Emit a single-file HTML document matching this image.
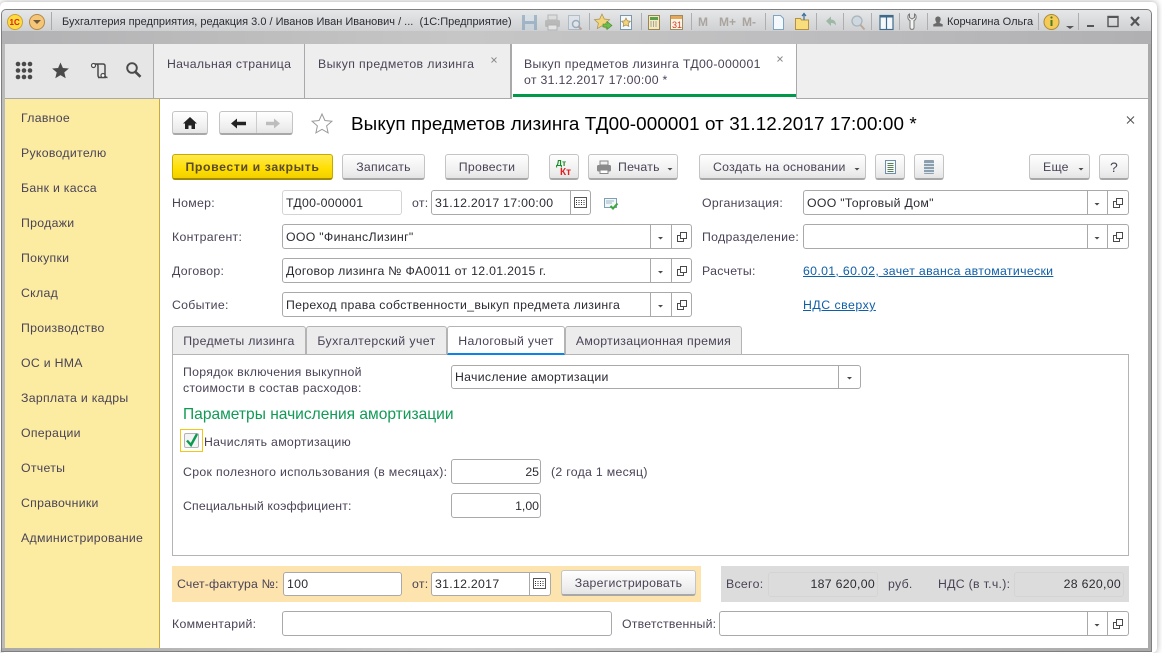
<!DOCTYPE html>
<html lang="ru"><head><meta charset="utf-8"><title>Выкуп предметов лизинга</title>
<style>
html,body{margin:0;padding:0;background:#fff}
body{width:1162px;height:653px;position:relative;overflow:hidden;font:12.3px/16px "Liberation Sans","Noto Sans CJK SC",sans-serif;color:#4a4356}
div,a,span.a{position:absolute;box-sizing:border-box}
.t{white-space:nowrap;height:16px;letter-spacing:.29px;margin-top:1px}
.n{margin-top:0}
.d{color:#2b2b33}
.f{background:#fff;border:1px solid #a9a9a9;border-radius:3px}
.l{border-color:#d4d4d4}
.s{width:1px;background:#a9a9a9}
.b{background:linear-gradient(#fff,#efefef 70%,#e4e4e4);border:1px solid #c4c4c4;border-bottom:2px solid #a8a8a8;border-radius:3px;text-align:center;line-height:25px;letter-spacing:.25px;white-space:nowrap;color:#4a4356}
.tab{background:#eee;border-right:1px solid #a9a9a9}
.pt{background:#ececec;border:1px solid #b4b4b4;border-bottom:0;border-radius:3px 3px 0 0;text-align:center;line-height:29px;letter-spacing:.3px;white-space:nowrap}
svg{position:absolute;left:0;top:0}
</style></head><body>
<div style="left:0;top:2px;width:1157px;height:651px;background:#fff;box-shadow:0 0 7px rgba(0,0,0,.35);border-radius:5px"></div>
<div style="left:1px;top:9px;width:1151px;height:643px;background:#9d9d9d;border:1px solid #7f7f7f;border-radius:5px 5px 0 0"></div>
<div style="left:2px;top:10px;width:1149px;height:21px;background:linear-gradient(#e6e7e8,#cfd0d2);border-radius:4px 4px 0 0"></div>
<div style="left:2px;top:31px;width:1149px;height:13px;background:linear-gradient(90deg,#b2b2b4,#c6c6c6 40%,#bdbdbf 70%,#b0b0b2)"></div>
<div style="left:2px;top:44px;width:3px;height:606px;background:#bbb"></div>
<div style="left:1148px;top:44px;width:3px;height:606px;background:#aaa"></div>
<div style="left:2px;top:648px;width:1149px;height:3px;background:linear-gradient(90deg,#aaa,#ccc 40%,#aaa)"></div>

<div class="t d n" style="left:62px;top:14px;font-size:11px;letter-spacing:0">Бухгалтерия предприятия, редакция 3.0 / Иванов Иван Иванович / ...&nbsp; (1С:Предприятие)</div>
<div class="t d n" style="left:947px;top:14px;font-size:11px;letter-spacing:0">Корчагина Ольга</div>
<div class="t n" style="left:698px;top:14px;font:bold 12px/16px 'Liberation Sans',sans-serif;color:#aaa49f;letter-spacing:0">M</div>
<div class="t n" style="left:719px;top:14px;font:bold 12px/16px 'Liberation Sans',sans-serif;color:#aaa49f;letter-spacing:0">M+</div>
<div class="t n" style="left:742px;top:14px;font:bold 12px/16px 'Liberation Sans',sans-serif;color:#aaa49f;letter-spacing:0">M-</div>

<!-- top tabs -->
<div style="left:5px;top:44px;width:1143px;height:55px;background:#efefef;border-bottom:1px solid #a9a9a9"></div>
<div style="left:5px;top:44px;width:149px;height:54px;background:#e6e6e6;border-right:1px solid #a9a9a9"></div>
<div class="tab" style="left:154px;top:44px;width:151px;height:54px"></div>
<div class="tab" style="left:305px;top:44px;width:206px;height:54px"></div>
<div style="left:511px;top:44px;width:286px;height:55px;background:#fff;border-right:1px solid #a9a9a9;border-left:1px solid #a9a9a9"></div>
<div style="left:513px;top:94px;width:283px;height:3px;background:#00994a"></div>
<div class="t" style="left:167px;top:55px">Начальная страница</div>
<div class="t" style="left:318px;top:55px;letter-spacing:.38px">Выкуп предметов лизинга</div>
<div class="t" style="left:524px;top:55px;letter-spacing:.33px">Выкуп предметов лизинга ТД00-000001</div>
<div class="t" style="left:524px;top:71px">от 31.12.2017 17:00:00 *</div>

<!-- sidebar + main -->
<div style="left:5px;top:99px;width:155px;height:549px;background:#fbeca2;border-right:1px solid #c9a93c"></div>
<div style="left:160px;top:99px;width:988px;height:549px;background:#fff"></div>
<div class="t" style="left:21px;top:109px">Главное</div>
<div class="t" style="left:21px;top:144px">Руководителю</div>
<div class="t" style="left:21px;top:179px">Банк и касса</div>
<div class="t" style="left:21px;top:214px">Продажи</div>
<div class="t" style="left:21px;top:249px">Покупки</div>
<div class="t" style="left:21px;top:284px">Склад</div>
<div class="t" style="left:21px;top:319px">Производство</div>
<div class="t" style="left:21px;top:354px">ОС и НМА</div>
<div class="t" style="left:21px;top:389px">Зарплата и кадры</div>
<div class="t" style="left:21px;top:424px">Операции</div>
<div class="t" style="left:21px;top:459px">Отчеты</div>
<div class="t" style="left:21px;top:494px">Справочники</div>
<div class="t" style="left:21px;top:529px">Администрирование</div>

<!-- nav + title -->
<div class="b" style="left:172px;top:111px;width:36px;height:24px"></div>
<div class="b" style="left:219px;top:111px;width:74px;height:24px"></div>
<div class="s" style="left:256px;top:112px;height:21px;background:#ccc"></div>
<div class="t n" style="left:351px;top:113px;font-size:18.85px;line-height:21px;height:21px;color:#000;letter-spacing:.1px">Выкуп предметов лизинга ТД00-000001 от 31.12.2017 17:00:00 *</div>

<!-- command bar -->
<div class="b" style="left:172px;top:154px;width:161px;height:26px;background:linear-gradient(#ffe94f,#ffdf00 60%,#f2d000);border-color:#c4a900;border-bottom-color:#a08a00;font-weight:bold;color:#5a4a30;letter-spacing:.6px">Провести и закрыть</div>
<div class="b" style="left:342px;top:154px;width:83px;height:26px">Записать</div>
<div class="b" style="left:445px;top:154px;width:84px;height:26px">Провести</div>
<div class="b" style="left:549px;top:154px;width:30px;height:26px"></div>
<div class="b" style="left:588px;top:154px;width:90px;height:26px;padding-left:10px;text-align:left"><span style="margin-left:19px">Печать</span></div>
<div class="b" style="left:699px;top:154px;width:167px;height:26px;text-align:left;padding-left:13px">Создать на основании</div>
<div class="b" style="left:875px;top:154px;width:30px;height:26px"></div>
<div class="b" style="left:914px;top:154px;width:30px;height:26px"></div>
<div class="b" style="left:1029px;top:154px;width:61px;height:26px;text-align:left;padding-left:13px">Еще</div>
<div class="b" style="left:1099px;top:154px;width:30px;height:26px;font-size:14px">?</div>

<!-- fields -->
<div class="t" style="left:172px;top:194px">Номер:</div>
<div class="f l" style="left:282px;top:190px;width:120px;height:25px"></div>
<div class="t d" style="left:286px;top:194px">ТД00-000001</div>
<div class="t" style="left:412px;top:194px">от:</div>
<div class="f" style="left:431px;top:190px;width:160px;height:25px"></div>
<div class="s" style="left:570px;top:191px;height:23px"></div>
<div class="t d" style="left:435px;top:194px">31.12.2017 17:00:00</div>
<div class="t" style="left:702px;top:194px">Организация:</div>
<div class="f" style="left:803px;top:190px;width:326px;height:25px"></div>
<div class="s" style="left:1087px;top:191px;height:23px"></div><div class="s" style="left:1107px;top:191px;height:23px"></div>
<div class="t d" style="left:807px;top:194px">ООО "Торговый Дом"</div>

<div class="t" style="left:172px;top:228px">Контрагент:</div>
<div class="f" style="left:282px;top:224px;width:410px;height:25px"></div>
<div class="s" style="left:650px;top:225px;height:23px"></div><div class="s" style="left:671px;top:225px;height:23px"></div>
<div class="t d" style="left:286px;top:228px">ООО "ФинансЛизинг"</div>
<div class="t" style="left:702px;top:228px">Подразделение:</div>
<div class="f" style="left:803px;top:224px;width:326px;height:25px"></div>
<div class="s" style="left:1087px;top:225px;height:23px"></div><div class="s" style="left:1107px;top:225px;height:23px"></div>

<div class="t" style="left:172px;top:262px">Договор:</div>
<div class="f" style="left:282px;top:258px;width:410px;height:25px"></div>
<div class="s" style="left:650px;top:259px;height:23px"></div><div class="s" style="left:671px;top:259px;height:23px"></div>
<div class="t d" style="left:286px;top:262px">Договор лизинга № ФА0011 от 12.01.2015 г.</div>
<div class="t" style="left:702px;top:262px">Расчеты:</div>
<div class="t" style="left:803px;top:262px;color:#0f5fa8;text-decoration:underline;letter-spacing:.33px">60.01, 60.02, зачет аванса автоматически</div>

<div class="t" style="left:172px;top:296px">Событие:</div>
<div class="f" style="left:282px;top:292px;width:410px;height:25px"></div>
<div class="s" style="left:650px;top:293px;height:23px"></div><div class="s" style="left:671px;top:293px;height:23px"></div>
<div class="t d" style="left:286px;top:296px">Переход права собственности_выкуп предмета лизинга</div>
<div class="t" style="left:803px;top:296px;color:#0f5fa8;text-decoration:underline;letter-spacing:.5px">НДС сверху</div>

<!-- page tabs -->
<div style="left:172px;top:354px;width:957px;height:202px;border:1px solid #b4b4b4;background:#fff"></div>
<div class="pt" style="left:172px;top:326px;width:134px;height:28px">Предметы лизинга</div>
<div class="pt" style="left:306px;top:326px;width:141px;height:28px;letter-spacing:.42px">Бухгалтерский учет</div>
<div class="pt" style="left:447px;top:326px;width:118px;height:29px;background:#fff;border-bottom:2px solid #0a84e8" >Налоговый учет</div>
<div class="pt" style="left:565px;top:326px;width:177px;height:28px">Амортизационная премия</div>

<div class="t n" style="left:183px;top:364px">Порядок включения выкупной</div>
<div class="t n" style="left:183px;top:380px">стоимости в состав расходов:</div>
<div class="f" style="left:451px;top:365px;width:410px;height:24px"></div>
<div class="s" style="left:838px;top:366px;height:22px"></div>
<div class="t d" style="left:455px;top:368px">Начисление амортизации</div>
<div class="t n" style="left:183px;top:405px;font-size:15.55px;line-height:19px;height:19px;color:#109a55;letter-spacing:0">Параметры начисления амортизации</div>
<div style="left:180px;top:429px;width:23px;height:23px;border:1px solid #f5c518"></div>
<div style="left:184px;top:433px;width:15px;height:15px;border:1px solid #b4b4b4;border-radius:2px;background:#f4f4f4"></div>
<div class="t" style="left:204px;top:433px">Начислять амортизацию</div>
<div class="t" style="left:183px;top:463px;letter-spacing:.33px">Срок полезного использования (в месяцах):</div>
<div class="f" style="left:451px;top:459px;width:90px;height:25px"></div>
<div class="t d" style="left:451px;top:463px;width:88px;text-align:right;letter-spacing:0">25</div>
<div class="t" style="left:551px;top:463px">(2 года 1 месяц)</div>
<div class="t" style="left:183px;top:497px;letter-spacing:.15px">Специальный коэффициент:</div>
<div class="f" style="left:451px;top:493px;width:90px;height:25px"></div>
<div class="t d" style="left:451px;top:497px;width:88px;text-align:right;letter-spacing:0">1,00</div>

<!-- footer -->
<div style="left:172px;top:566px;width:529px;height:36px;background:#fde4ae"></div>
<div class="t" style="left:177px;top:575px;letter-spacing:.15px">Счет-фактура №:</div>
<div class="f" style="left:283px;top:572px;width:119px;height:24px"></div>
<div class="t d" style="left:287px;top:575px">100</div>
<div class="t" style="left:412px;top:575px">от:</div>
<div class="f" style="left:431px;top:572px;width:120px;height:24px"></div>
<div class="s" style="left:529px;top:573px;height:22px"></div>
<div class="t d" style="left:435px;top:575px">31.12.2017</div>
<div class="b" style="left:561px;top:570px;width:135px;height:26px">Зарегистрировать</div>
<div style="left:721px;top:566px;width:408px;height:36px;background:#dcdcdc"></div>
<div style="left:768px;top:572px;width:110px;height:25px;border:1px solid #d4d4d4;border-radius:3px"></div>
<div style="left:1014px;top:572px;width:110px;height:25px;border:1px solid #d4d4d4;border-radius:3px"></div>
<div class="t n" style="left:726px;top:576px">Всего:</div>
<div class="t d n" style="left:768px;top:576px;width:107px;text-align:right">187 620,00</div>
<div class="t n" style="left:888px;top:576px">руб.</div>
<div class="t n" style="left:938px;top:576px">НДС (в т.ч.):</div>
<div class="t d n" style="left:1014px;top:576px;width:107px;text-align:right">28 620,00</div>

<div class="t" style="left:172px;top:615px">Комментарий:</div>
<div class="f" style="left:282px;top:611px;width:330px;height:25px"></div>
<div class="t" style="left:622px;top:615px;letter-spacing:.22px">Ответственный:</div>
<div class="f" style="left:719px;top:611px;width:410px;height:25px"></div>
<div class="s" style="left:1087px;top:612px;height:23px"></div><div class="s" style="left:1107px;top:612px;height:23px"></div>

<svg width="1162" height="653" viewBox="0 0 1162 653" fill="none">
<defs>
<g id="car"><path d="M-2.500 1h5l-2.500 2.500z" fill="#4a4a4a"/></g>
<g id="op"><rect x="1.500" y="-4.500" width="6" height="6" stroke="#4a4a4a" fill="#fff"/><path d="M1.500 -1.500h-3v6h6v-3" stroke="#4a4a4a"/></g>
<g id="cal"><rect x="0.500" y="0.500" width="12" height="10" fill="#fff" stroke="#555"/><path d="M2 3.500h1m1.500 0h1m1.500 0h1m1.500 0h1M2 5.500h1m1.500 0h1m1.500 0h1m1.500 0h1M2 7.500h1m1.500 0h1m1.500 0h1m1.500 0h1" stroke="#333"/></g>
</defs>
<!-- title bar left -->
<circle cx="15" cy="22" r="7.500" fill="#ffdc3c" stroke="#c9a040"/><text x="9.500" y="25" font-family="Liberation Sans" font-weight="bold" font-size="8" fill="#d8201c">1С</text>
<circle cx="37" cy="22" r="7.500" fill="#f6c678" stroke="#b08848"/><path d="M33 20h8l-4 4z" fill="#6d5a3c"/>
<path d="M51.500 12v18" stroke="#aaa"/>
<!-- toolbar separators -->
<path d="M589.500 13v17M641.500 13v17M691.500 13v17M765.500 13v17M816.500 13v17M843.500 13v17M871.500 13v17M899.500 13v17M927.500 13v17M1038.500 13v17M1078.500 13v17" stroke="#aeaeb0"/>
<!-- save, print, preview -->
<g opacity=".6"><rect x="522" y="15" width="15" height="15" fill="#7d9db8"/><rect x="525" y="15" width="9" height="6" fill="#d7e2ea"/><rect x="525" y="24" width="9" height="6" fill="#c5d2dd"/></g>
<g opacity=".6"><rect x="548" y="15" width="9" height="5" fill="#ddd" stroke="#999"/><rect x="545" y="20" width="15" height="7" rx="1.500" fill="#a4a4a4"/><rect x="548" y="25" width="9" height="5" fill="#eee" stroke="#999"/></g>
<g opacity=".6"><rect x="568.500" y="15.500" width="11" height="14" fill="#dfe8ef" stroke="#93a8bb"/><circle cx="576" cy="24" r="3.500" fill="#e8eef3" stroke="#6f8fa8" stroke-width="1.500"/><path d="M578.500 26.500l3 3" stroke="#a08070" stroke-width="2"/></g>
<!-- stars -->
<path d="M602 14l2.300 5 5.300.6-4 3.600 1.100 5.300-4.700-2.700-4.700 2.700 1.100-5.300-4-3.600 5.300-.6z" fill="#f3d67c" stroke="#a89050" stroke-width=".7"/><path d="M603 24h4v-2.500l5 4-5 4v-2.500h-4z" fill="#6cc14a" stroke="#3d8a2a" stroke-width=".6"/>
<rect x="620.500" y="15.500" width="11" height="14" fill="#f6f9fb" stroke="#7a97af"/><path d="M626 18l1.400 2.900 3 .4-2.200 2.100.6 3-2.800-1.500-2.800 1.500.6-3-2.200-2.100 3-.4z" fill="#f3d67c" stroke="#a08648" stroke-width=".7"/>
<!-- calc & cal -->
<rect x="648.500" y="15.500" width="11" height="14" fill="#f2e8c4" stroke="#9a8550"/><rect x="650" y="17" width="8" height="3" fill="#5aa04a"/><path d="M650.500 22h1m1.500 0h1m1.500 0h1m-6 2h1m1.500 0h1m1.500 0h1m-6 2h1m1.500 0h1m1.500 0h1" stroke="#665"/>
<rect x="670.500" y="15.500" width="12" height="14" fill="#fbf5e8" stroke="#a08a5c"/><rect x="671" y="16" width="11" height="3" fill="#e4a858"/><text x="672" y="28" font-family="Liberation Sans" font-size="9" fill="#d83a20">31</text>
<!-- doc, folder -->
<path d="M773.500 15.500h7l3 3v11h-10z" fill="#f4f9fd" stroke="#7fa4c2"/>
<path d="M795.500 18.500h5l1 1.500h7v9.500h-13z" fill="#f7dd7c" stroke="#b69040"/><path d="M804 20v-6m-2 2l2-2.500 2 2.500" stroke="#3a6f98" stroke-width="1.200"/>
<!-- back arrow -->
<path d="M826 21l5-4.500v3c3.500 0 5 2.500 5 6-1.500-2-3-2.500-5-2.500v3z" fill="#9db8a4"/>
<!-- search -->
<circle cx="857" cy="21" r="5" fill="#cfd8de" stroke="#a8b4bd" stroke-width="1.300"/><path d="M860.500 25l4 4.500" stroke="#bca898" stroke-width="2"/>
<!-- panels -->
<rect x="880" y="15.500" width="13" height="14" fill="#f4f8fb" stroke="#3f6a8a" stroke-width="1.200"/><rect x="880" y="15" width="13" height="2.500" fill="#3f6a8a"/><path d="M886.500 17v12" stroke="#3f6a8a" stroke-width="1.200"/>
<!-- wrench -->
<path d="M909.500 14v3.500l2.500 1.500 2.500-1.500v-3.500c2 1 2.500 5-.5 6.500v7c0 2.500-4 2.500-4 0v-7c-3-1.500-2.500-5.500-.5-6.500z" fill="#f4f4f4" stroke="#777"/>
<!-- user -->
<path d="M938 16.500c1.700 0 2.700 1.200 2.700 2.700 0 1.300-.5 2.200-1 2.800v1l3 1.300v2.200h-9.400v-2.200l3-1.300v-1c-.5-.6-1-1.500-1-2.800 0-1.500 1-2.700 2.700-2.700z" fill="#6a6a6a"/>
<!-- info -->
<circle cx="1051.500" cy="22" r="7.500" fill="#f5cb55" stroke="#a98a3c"/><path d="M1051.500 20v6" stroke="#4a7a2c" stroke-width="2"/><circle cx="1051.500" cy="17.500" r="1.100" fill="#4a7a2c"/>
<path d="M1066 26h8l-4 3z" fill="#555"/>
<!-- window controls -->
<path d="M1087 26h7" stroke="#555" stroke-width="2"/>
<rect x="1108" y="16.500" width="10" height="10" stroke="#555" stroke-width="1.400"/><path d="M1108 17h10" stroke="#555" stroke-width="2"/>
<path d="M1131 17l8 8.500m0-8.500l-8 8.500" stroke="#555" stroke-width="2.200"/>
<!-- panel icons -->
<g fill="#4a4a4a"><circle cx="18" cy="64" r="2.300"/><circle cx="24" cy="64" r="2.300"/><circle cx="30" cy="64" r="2.300"/><circle cx="18" cy="70.500" r="2.300"/><circle cx="24" cy="70.500" r="2.300"/><circle cx="30" cy="70.500" r="2.300"/><circle cx="18" cy="77" r="2.300"/><circle cx="24" cy="77" r="2.300"/><circle cx="30" cy="77" r="2.300"/></g>
<path d="M60.500 62.500l2.400 5.500 6 .5-4.600 3.900 1.400 5.800-5.200-3.100-5.200 3.100 1.400-5.800-4.600-3.900 6-.5z" fill="#4a4a4a"/>
<path d="M93 64h10c1.500 0 2 1 2 2v9c0 2 1 2.500 2.500 2.500M98 77.500h8M96 64c1.500 0 2 1 2 2v9c0 1.500.5 2.500 2 2.500" stroke="#4a4a4a" stroke-width="1.500"/><circle cx="93.500" cy="65.500" r="2" fill="#fff" stroke="#4a4a4a" stroke-width="1.200"/><circle cx="103" cy="75.500" r="2" fill="#fff" stroke="#4a4a4a" stroke-width="1.200"/>
<circle cx="132" cy="68" r="4.800" stroke="#4a4a4a" stroke-width="1.900"/><path d="M135.500 72l5 4.800" stroke="#4a4a4a" stroke-width="2.600"/>
<!-- tab close -->
<path d="M491.500 57.500l5 5m0-5l-5 5M777.500 56.500l5 5m0-5l-5 5" stroke="#8a8a8a" stroke-width=".9"/>
<!-- nav -->
<path d="M190 117l-7 6.500h2v5.500h3.500v-3.500h3v3.500h3.500v-5.500h2z" fill="#222"/>
<path d="M231 123.500l6-5v3.300h9v3.400h-9v3.300z" fill="#222"/>
<path d="M280 123.500l-6-5v3.300h-8v3.400h8v3.300z" fill="#bdbdbd"/>
<path d="M322 114l2.900 6.500 7 .7-5.300 4.700 1.500 7-6.100-3.600-6.100 3.600 1.500-7-5.300-4.700 7-.7z" fill="#fff" stroke="#9a9a9a"/>
<path d="M1127 116.500l7 7m0-7l-7 7" stroke="#555" stroke-width="1.100"/>
<!-- command bar icons -->
<text x="556" y="166" font-family="Liberation Sans" font-weight="bold" font-size="8.500" fill="#1a8a2a">Дт</text><text x="560" y="175" font-family="Liberation Sans" font-weight="bold" font-size="10" fill="#e02020">Кт</text>
<rect x="600" y="161" width="8" height="4" fill="#f0f0f0" stroke="#888"/><rect x="597" y="165" width="14" height="6.500" rx="1.500" fill="#8a8a8a"/><rect x="600" y="170" width="8" height="3.500" fill="#fff" stroke="#888"/>
<use href="#car" x="670" y="167"/><use href="#car" x="857" y="167"/><use href="#car" x="1081" y="167"/>
<rect x="885.500" y="160.500" width="10" height="13" fill="#f5f9fc" stroke="#6f8fa8"/><path d="M887.500 163.500h6M887.500 165.500h6M887.500 167.500h6M887.500 169.500h6M887.500 171.500h6" stroke="#5b7c55"/>
<rect x="924" y="160" width="10" height="14" rx="1" fill="#8c9fae"/><path d="M924 163.500h10M924 166.500h10M924 169.500h10M924 172.500h10" stroke="#dfe7ec"/>
<!-- field icons -->
<use href="#cal" x="574" y="197"/>
<use href="#cal" x="533" y="578"/>
<rect x="604.500" y="198.500" width="12" height="9" fill="#f2f7fa" stroke="#7f9fb5"/><path d="M606 201h8M606 203h6" stroke="#9fb6c6"/><path d="M610.500 206l2.500 2.500 4.500-5" stroke="#3aa83a" stroke-width="2"/>
<use href="#car" x="1097" y="202"/><use href="#op" x="1115" y="203"/>
<use href="#car" x="660.500" y="236"/><use href="#op" x="679" y="237"/>
<use href="#car" x="1097" y="236"/><use href="#op" x="1115" y="237"/>
<use href="#car" x="660.500" y="270"/><use href="#op" x="679" y="271"/>
<use href="#car" x="660.500" y="304"/><use href="#op" x="679" y="305"/>
<use href="#car" x="849.500" y="376"/>
<use href="#car" x="1097" y="623"/><use href="#op" x="1115" y="624"/>
<!-- check -->
<path d="M187 440.500l4 4.500 6-11" stroke="#0c9a50" stroke-width="2.400"/>
</svg>
</body></html>
